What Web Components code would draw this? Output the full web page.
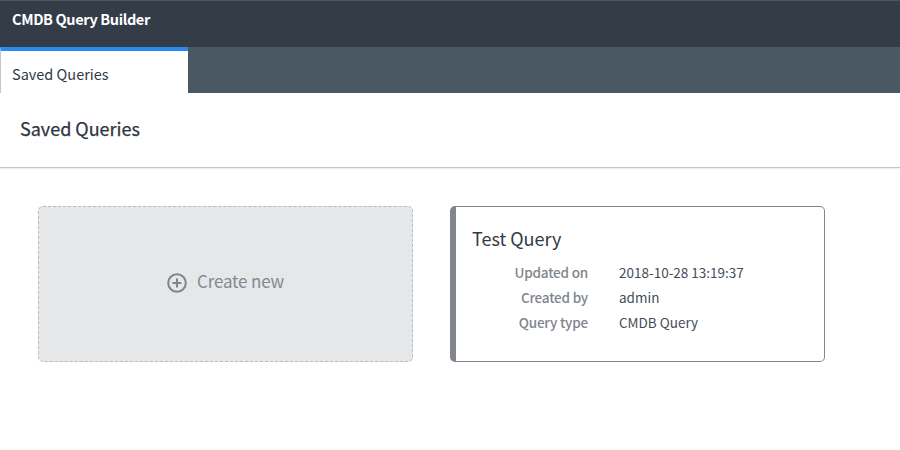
<!DOCTYPE html>
<html>
<head>
<meta charset="utf-8">
<title>CMDB Query Builder</title>
<style>
  html, body { margin: 0; padding: 0; background: #fff; }
  body { font-family: "Noto Sans CJK JP", "Source Sans Pro", "Open Sans", sans-serif; color: #323a45; }
</style>
</head>
<body>
<app-header title="CMDB Query Builder"></app-header>
<tab-bar label="Saved Queries"></tab-bar>
<page-title>Saved Queries</page-title>
<card-grid>
  <create-card>Create new</create-card>
  <query-card name="Test Query" updated="2018-10-28 13:19:37" author="admin" type="CMDB Query"></query-card>
</card-grid>

<script>
class AppHeader extends HTMLElement {
    constructor() {
        super();
        this.attachShadow({ mode: 'open' });
    }
    connectedCallback() {
        this.shadowRoot.innerHTML = `
            <style>
                :host {
                    display: flex;
                    align-items: center;
                    box-sizing: border-box;
                    height: 47px;
                    padding: 0 0 10px 12px;
                    background: #343c48;
                    border-top: 1px solid #4a5560;
                    color: #fff;
                    font-size: 14.5px;
                    font-weight: 700;
                    letter-spacing: -0.37px;
                    line-height: 20px;
                }
            </style>
            <span>${this.getAttribute('title')}</span>
        `;
    }
}

class TabBar extends HTMLElement {
    constructor() {
        super();
        this.attachShadow({ mode: 'open' });
    }
    connectedCallback() {
        this.shadowRoot.innerHTML = `
            <style>
                :host {
                    display: flex;
                    height: 46px;
                    background: #4a5864;
                }
                .tab {
                    box-sizing: border-box;
                    width: 188px;
                    height: 46px;
                    padding: 8px 0 0 11px;
                    background: #fff;
                    border-top: 4px solid #2a8af0;
                    border-left: 1px solid #c4c6c9;
                    color: #323a45;
                    font-size: 14.5px;
                    line-height: 30px;
                }
            </style>
            <div class="tab">${this.getAttribute('label')}</div>
        `;
    }
}

class PageTitle extends HTMLElement {
    constructor() {
        super();
        this.attachShadow({ mode: 'open' });
    }
    connectedCallback() {
        this.shadowRoot.innerHTML = `
            <style>
                :host {
                    display: flex;
                    align-items: center;
                    box-sizing: border-box;
                    height: 75px;
                    padding: 0 0 4px 20px;
                    border-bottom: 1px solid #c3c4c6;
                    box-shadow: 0 1px 1px rgba(0, 0, 0, 0.06);
                    color: #2e3541;
                    font-size: 18px;
                    font-weight: 400;
                    -webkit-text-stroke: 0.25px #2e3541;
                    line-height: 28px;
                }
            </style>
            <slot></slot>
        `;
    }
}

class CardGrid extends HTMLElement {
    constructor() {
        super();
        this.attachShadow({ mode: 'open' });
    }
    connectedCallback() {
        this.shadowRoot.innerHTML = `
            <style>
                :host {
                    display: flex;
                    gap: 37px;
                    padding: 38px 0 0 38px;
                }
            </style>
            <slot></slot>
        `;
    }
}

class CreateCard extends HTMLElement {
    constructor() {
        super();
        this.attachShadow({ mode: 'open' });
    }
    connectedCallback() {
        this.shadowRoot.innerHTML = `
            <style>
                :host {
                    display: flex;
                    align-items: center;
                    justify-content: center;
                    gap: 10px;
                    box-sizing: border-box;
                    width: 375px;
                    height: 156px;
                    padding-bottom: 6px;
                    background: #e6e7e9;
                    border: 1px dashed #b9bbbf;
                    border-radius: 5px;
                    color: #848992;
                    font-size: 17px;
                    letter-spacing: -0.15px;
                    line-height: 24px;
                }
                svg { display: block; width: 20px; height: 20px; margin-top: 4px; }
            </style>
            <svg viewBox="0 0 20 20" fill="none" stroke="#7f848d" stroke-width="2">
                <circle cx="10" cy="10" r="8.8"/>
                <path d="M10 5.5v9M5.5 10h9"/>
            </svg>
            <span><slot></slot></span>
        `;
    }
}

class QueryCard extends HTMLElement {
    constructor() {
        super();
        this.attachShadow({ mode: 'open' });
    }
    connectedCallback() {
        const rows = [
            ['Updated on', this.getAttribute('updated')],
            ['Created by', this.getAttribute('author')],
            ['Query type', this.getAttribute('type')]
        ];
        this.shadowRoot.innerHTML = `
            <style>
                :host {
                    display: block;
                    box-sizing: border-box;
                    width: 375px;
                    height: 156px;
                    padding: 18px 0 0 16px;
                    background: #fff;
                    border: 1px solid #80858e;
                    border-left: 6px solid #80858e;
                    border-radius: 5px;
                }
                h3 {
                    margin: 0 0 8px;
                    color: #323a45;
                    font-size: 18px;
                    font-weight: 400;
                    line-height: 27px;
                }
                dl {
                    display: grid;
                    grid-template-columns: 116px 1fr;
                    column-gap: 31px;
                    margin: 0;
                    font-size: 13.5px;
                    line-height: 25px;
                }
                dt {
                    color: #80858e;
                    font-weight: 500;
                    letter-spacing: -0.2px;
                    text-align: right;
                }
                dd {
                    margin: 0;
                    color: #454c57;
                }
            </style>
            <h3>${this.getAttribute('name')}</h3>
            <dl>
                ${rows.map(row => `
                    <dt>${row[0]}</dt>
                    <dd>${row[1]}</dd>
                `).join('')}
            </dl>
        `;
    }
}

customElements.define('app-header', AppHeader);
customElements.define('tab-bar', TabBar);
customElements.define('page-title', PageTitle);
customElements.define('card-grid', CardGrid);
customElements.define('create-card', CreateCard);
customElements.define('query-card', QueryCard);
</script>
</body>
</html>
